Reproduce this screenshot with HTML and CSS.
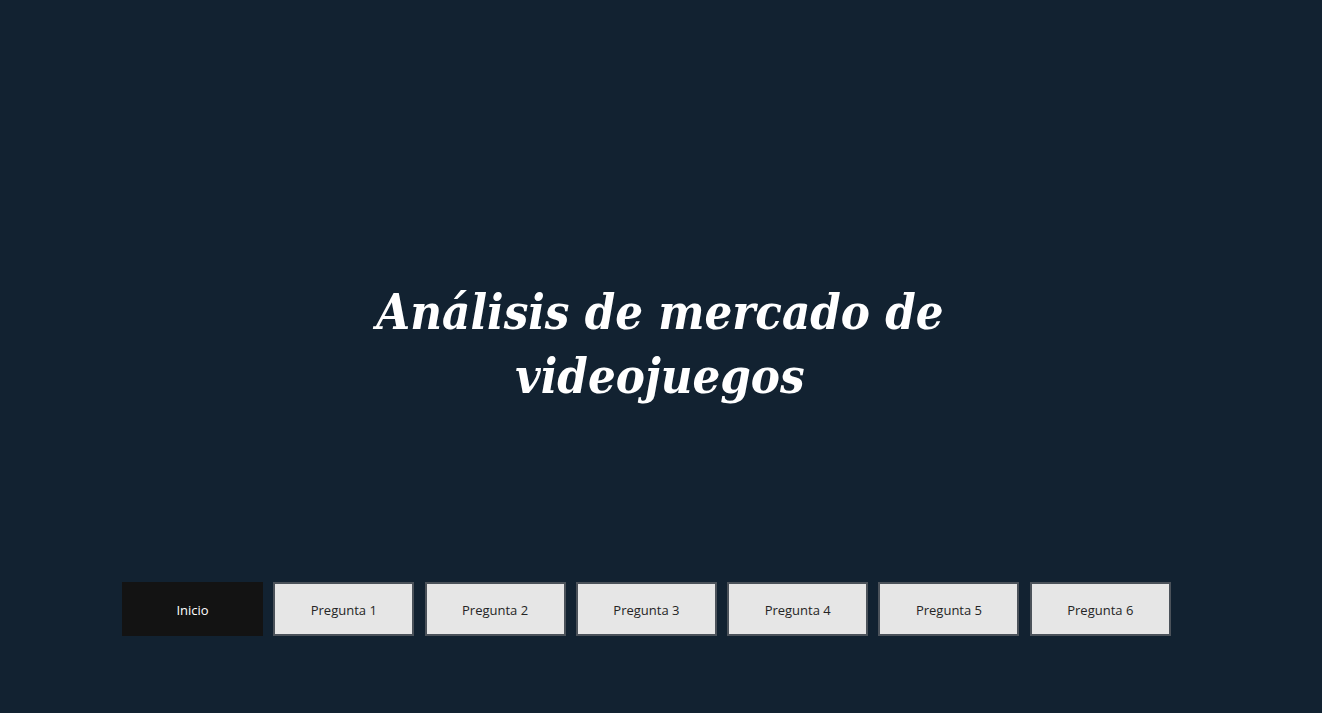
FILE: index.html
```html
<!DOCTYPE html>
<html lang="es">
<head>
<meta charset="utf-8">
<title>Análisis de mercado de videojuegos</title>
<link rel="stylesheet" href="styles.css">
</head>
<body>
<div class="page">
  <h1 class="title">Análisis de mercado de<br>videojuegos</h1>
  <nav class="nav">
    <button class="btn btn-active">Inicio</button>
    <button class="btn">Pregunta 1</button>
    <button class="btn">Pregunta 2</button>
    <button class="btn">Pregunta 3</button>
    <button class="btn">Pregunta 4</button>
    <button class="btn">Pregunta 5</button>
    <button class="btn">Pregunta 6</button>
  </nav>
</div>
</body>
</html>
```
FILE: styles.css
```css
html, body {
  margin: 0;
  padding: 0;
  background: #122231;
}
.page {
  width: 1322px;
  height: 713px;
  display: flex;
  flex-direction: column;
  overflow: hidden;
}
.title {
  margin: 280px 0 0 0;
  width: 1320px;
  text-align: center;
  color: #ffffff;
  font-family: "DejaVu Serif Condensed", "DejaVu Serif", serif;
  font-stretch: condensed;
  font-style: italic;
  font-weight: bold;
  font-size: 48.6px;
  line-height: 64px;
}
.nav {
  margin-top: 174px;
  padding-left: 122px;
  display: flex;
  gap: 10.3px;
}
.btn {
  box-sizing: border-box;
  flex: 0 0 141px;
  width: 141px;
  height: 54px;
  margin: 0;
  padding: 2px 0 0 0;
  background: #e6e6e6;
  border: 2px solid #4b525a;
  color: #252525;
  font-family: "Open Sans", "Noto Sans", sans-serif;
  font-size: 13px;
  cursor: pointer;
}
.btn-active {
  background: #131313;
  border-color: #131313;
  color: #ffffff;
}
```
